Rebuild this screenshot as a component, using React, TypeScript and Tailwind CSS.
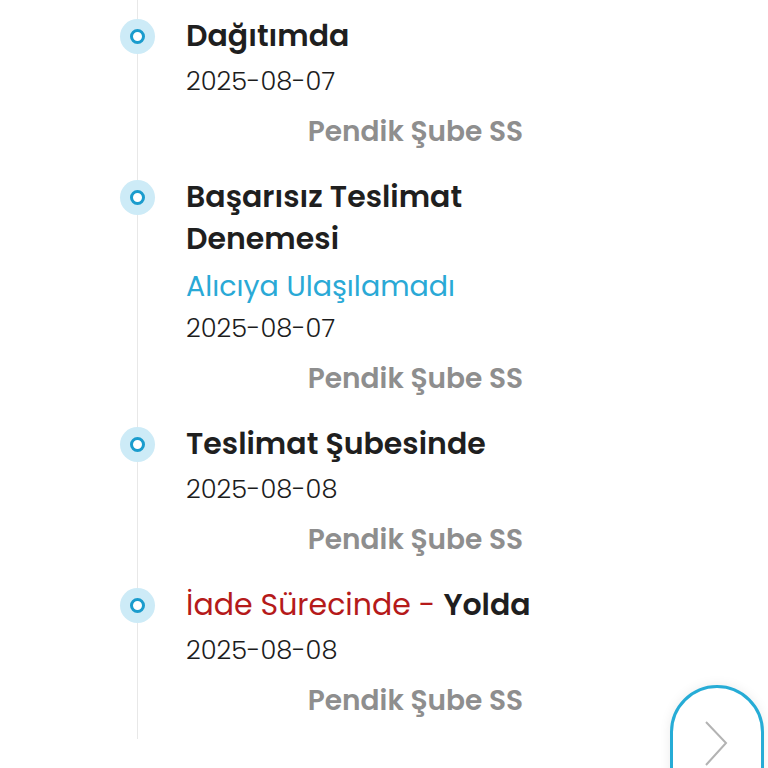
type Step = {
  title: string;
  prefix?: string;
  note?: string;
  date: string;
  place: string;
};

const steps: Step[] = [
  { title: 'Dağıtımda', date: '2025-08-07', place: 'Pendik Şube SS' },
  { title: 'Başarısız Teslimat Denemesi', note: 'Alıcıya Ulaşılamadı', date: '2025-08-07', place: 'Pendik Şube SS' },
  { title: 'Teslimat Şubesinde', date: '2025-08-08', place: 'Pendik Şube SS' },
  { title: 'Yolda', prefix: 'İade Sürecinde - ', date: '2025-08-08', place: 'Pendik Şube SS' },
];

const Dot = () => (
  <div className="absolute left-[-18px] top-[4px] w-[35px] h-[35px] rounded-full bg-[#cdebf7] flex items-center justify-center">
    <div className="w-[15px] h-[15px] rounded-full border-[3.5px] border-[#1a9ccd] bg-white"></div>
  </div>
);

export default function App() {
  return (
    <div className="min-h-[768px] bg-white font-['Poppins','Inter','Noto_Sans',sans-serif] text-[#1f1f1f]">
      <div className="ml-[137px] w-[420px] border-l border-[#e8e8e8] pt-[15px] pb-[17px]">
        {steps.map((step, i) => (
          <div key={i} className={`relative pl-[48px] ${i < steps.length - 1 ? 'pb-[23px]' : ''}`}>
            <Dot />
            <div className="w-[360px]">
              <h3 className="text-[30px] leading-[42px] font-semibold">
                {step.prefix && <span className="font-normal text-[#b51a1a]">{step.prefix}</span>}
                {step.title}
              </h3>
              {step.note && (
                <p className="mt-[5px] text-[28.5px] leading-[42px] text-[#2aa9d6]">{step.note}</p>
              )}
              <p className={`${step.note ? '' : 'mt-[3px]'} text-[25.7px] leading-[42px] font-light text-[#1c1c1c]`}>{step.date}</p>
              <p className="mt-[9px] pr-[23px] text-right text-[28px] leading-[42px] font-semibold text-[#8e8e8e]">
                {step.place}
              </p>
            </div>
          </div>
        ))}
      </div>

      <button className="fixed left-[670px] top-[685px] w-[94px] h-[130px] rounded-t-full border-[3px] border-[#26acd6] bg-white shadow-[0_0_12px_rgba(0,0,0,0.08)] flex justify-center pt-[32px]">
        <svg width="26" height="48" viewBox="0 0 26 48" className="ml-[-2px]">
          <polyline points="3,2 23,23 3,45" fill="none" stroke="#b3b3b3" strokeWidth="2" />
        </svg>
      </button>
    </div>
  );
}
